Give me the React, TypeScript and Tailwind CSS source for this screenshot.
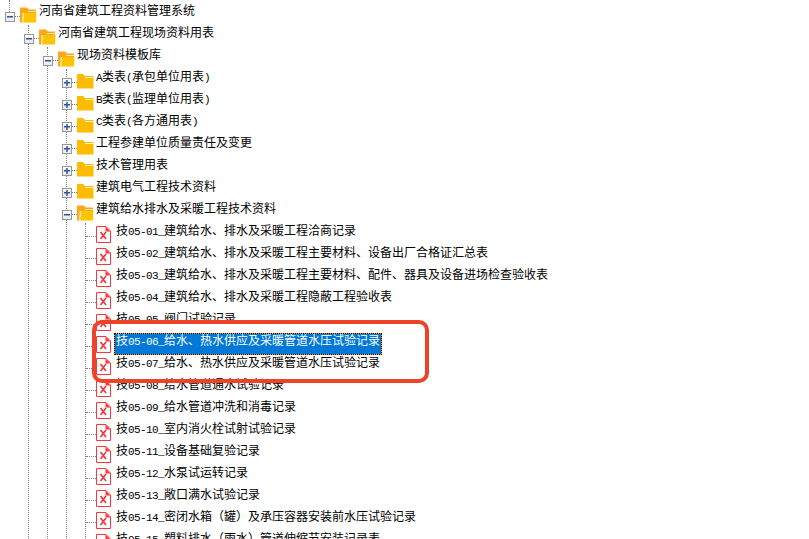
import React from "react";

const cjk = '"Noto Sans CJK SC", sans-serif';

function Label({ text, selected }: { text: string; selected?: boolean }) {
  const runs = text.match(/[\x20-\x7e]+|[^\x20-\x7e]+/g) ?? [];
  const body = runs.map((r, i) =>
    /^[\x20-\x7e]/.test(r) ? (
      <span key={i} className="font-['Liberation_Mono',monospace] text-[11px] font-normal tracking-[-0.6px]">
        {r}
      </span>
    ) : (
      <span key={i}>{r}</span>
    )
  );
  return (
    <div
      className={
        selected
          ? "h-[22px] shrink-0 border border-dotted border-black bg-[#fb9a1e] whitespace-nowrap"
          : "h-[22px] shrink-0 border border-transparent whitespace-nowrap"
      }
    >
      <div
        className={
          selected
            ? "h-full bg-[#0078d7] px-px text-[12px] leading-[11px] text-white font-['Noto_Sans_CJK_SC',sans-serif]"
            : "h-full px-px text-[12px] leading-[11px] text-black font-['Noto_Sans_CJK_SC',sans-serif]"
        }
      >
        {body}
      </div>
    </div>
  );
}

function Expander({ open }: { open?: boolean }) {
  return (
    <svg width="10" height="10" viewBox="0 0 10 10" className="mt-[9px] -ml-[5px] shrink-0">
      <rect x="0.5" y="0.5" width="9" height="9" fill="#ededed" stroke="#969696" />
      <rect x="1" y="1" width="8" height="2" fill="#ffffff" />
      <rect x="2" y="4" width="6" height="1.5" fill="#2f55a4" />
      {!open && <rect x="4.2" y="2" width="1.5" height="6" fill="#2f55a4" />}
    </svg>
  );
}

function ClosedFolder() {
  return (
    <svg width="17" height="16" viewBox="0 0 17 16" className="mt-1 shrink-0">
      <path d="M0 1 H6 L8 3 H16.5 V15.5 H0 Z" fill="#ffbb00" />
      <rect x="8" y="4" width="8" height="1" fill="#fff3c4" />
    </svg>
  );
}

function OpenFolder() {
  return (
    <svg width="17" height="16" viewBox="0 0 17 16" className="mt-1 shrink-0">
      <path d="M0 0.5 H7 L9 2.5 H16 V6 H3 V15.5 H0 Z" fill="#fba81c" />
      <rect x="8" y="4" width="8" height="1" fill="#ffe9b0" />
      <path d="M3 15.5 L3.5 6 H16.5 L16 15.5 Z" fill="#ffc400" />
      <path d="M2.2 15.5 L2.7 6 H3.7 L3.2 15.5 Z" fill="#fff6d8" />
    </svg>
  );
}

function FileIcon() {
  return (
    <svg width="15" height="17" viewBox="0 0 15 17" className="mt-[3px] shrink-0">
      <path d="M0.5 0.5 H10 L14.5 5 V16.5 H0.5 Z" fill="#ffffff" stroke="#f9363b" />
      <path d="M9.5 0.5 V5.5 H14.5 Z" fill="#f9363b" />
      <path d="M4.5 6 L10 13 M10 6 L4.5 13" stroke="#f4333a" strokeWidth="1.6" fill="none" />
    </svg>
  );
}

function Branch({
  text,
  open,
  children,
}: {
  text: string;
  open?: boolean;
  children?: React.ReactNode;
}) {
  return (
    <div>
      <div className="flex h-[22px] items-start">
        <Expander open={open} />
        <div className="mt-[13px] h-0 w-[5px] shrink-0 border-t border-dotted border-[#808080]" />
        {open ? <OpenFolder /> : <ClosedFolder />}
        <Label text={text} />
      </div>
      {children && <div className="ml-[18px] border-l border-dotted border-[#808080]">{children}</div>}
    </div>
  );
}

function Leaf({ text, selected }: { text: string; selected?: boolean }) {
  return (
    <div className="flex h-[22px] items-start">
      <div className="mt-[13px] h-0 w-[10px] shrink-0 border-t border-dotted border-[#808080]" />
      <FileIcon />
      <div className="ml-[3px]">
        <Label text={text} selected={selected} />
      </div>
    </div>
  );
}

const leaves = [
  "技05-01_建筑给水、排水及采暖工程洽商记录",
  "技05-02_建筑给水、排水及采暖工程主要材料、设备出厂合格证汇总表",
  "技05-03_建筑给水、排水及采暖工程主要材料、配件、器具及设备进场检查验收表",
  "技05-04_建筑给水、排水及采暖工程隐蔽工程验收表",
  "技05-05_阀门试验记录",
  "技05-06_给水、热水供应及采暖管道水压试验记录",
  "技05-07_给水、热水供应及采暖管道水压试验记录",
  "技05-08_给水管道通水试验记录",
  "技05-09_给水管道冲洗和消毒记录",
  "技05-10_室内消火栓试射试验记录",
  "技05-11_设备基础复验记录",
  "技05-12_水泵试运转记录",
  "技05-13_敞口满水试验记录",
  "技05-14_密闭水箱（罐）及承压容器安装前水压试验记录",
  "技05-15_塑料排水（雨水）管道伸缩节安装记录表",
];

export default function App() {
  return (
    <div className="relative h-[539px] w-[809px] overflow-hidden bg-white pt-[3px] pl-[10px]" style={{ fontFamily: cjk }}>
      <div className="absolute left-[9px] top-0 h-[12px] border-l border-dotted border-[#808080]" />
      <Branch text="河南省建筑工程资料管理系统" open>
        <Branch text="河南省建筑工程现场资料用表" open>
          <Branch text="现场资料模板库" open>
            <Branch text="A类表(承包单位用表)" />
            <Branch text="B类表(监理单位用表)" />
            <Branch text="C类表(各方通用表)" />
            <Branch text="工程参建单位质量责任及变更" />
            <Branch text="技术管理用表" />
            <Branch text="建筑电气工程技术资料" />
            <Branch text="建筑给水排水及采暖工程技术资料" open>
              {leaves.map((t, i) => (
                <Leaf key={t + i} text={t} selected={i === 5} />
              ))}
            </Branch>
          </Branch>
        </Branch>
      </Branch>
      <div className="absolute left-[92px] top-[320px] h-[63px] w-[337px] rounded-[10px] border-4 border-[#ee4328]" />
    </div>
  );
}
